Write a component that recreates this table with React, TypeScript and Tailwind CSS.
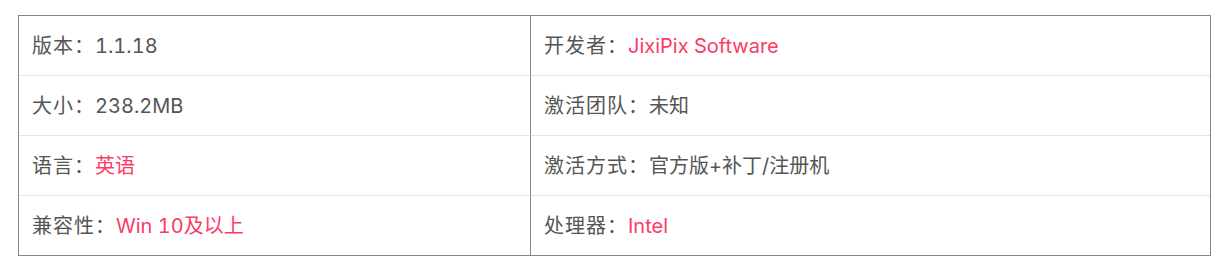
const rows: [string, string, boolean, string, string, boolean][] = [
  ["版本：", "1.1.18", false, "开发者：", "JixiPix Software", true],
  ["大小：", "238.2MB", false, "激活团队：", "未知", false],
  ["语言：", "英语", true, "激活方式：", "官方版+补丁/注册机", false],
  ["兼容性：", "Win 10及以上", true, "处理器：", "Intel", true],
];

function Cell({ label, value, pink, left, last }: { label: string; value: string; pink: boolean; left: boolean; last: boolean }) {
  return (
    <div
      className={
        "flex items-center pl-[13px] text-[20px] text-[#555] tabular-nums " +
        (last ? "h-[59px] " : "h-[60px] border-b border-[#dce3f2] ") +
        (left ? "border-r border-r-[#858585]" : "")
      }
    >
      <span className="tracking-[0.05em]">{label}</span>
      <span className={pink ? "text-[#fc3a68]" : ""}>{value}</span>
    </div>
  );
}

export default function App() {
  return (
    <div className="bg-white h-[257px] pt-[15px] pl-[18px]" style={{ fontFamily: 'Inter, "Noto Sans CJK SC", sans-serif' }}>
      <div className="w-[1193px] border border-[#858585] grid grid-cols-[512px_1fr]">
        {rows.map((r, i) => [
          <Cell key={i + "a"} label={r[0]} value={r[1]} pink={r[2]} left={true} last={i === rows.length - 1} />,
          <Cell key={i + "b"} label={r[3]} value={r[4]} pink={r[5]} left={false} last={i === rows.length - 1} />,
        ])}
      </div>
    </div>
  );
}
